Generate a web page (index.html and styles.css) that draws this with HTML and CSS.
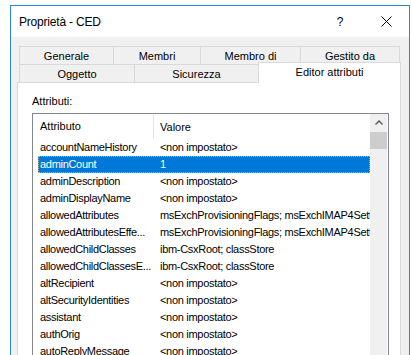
FILE: index.html
```html
<!DOCTYPE html>
<html lang="it">
<head>
    <meta charset="UTF-8">
    <title>Proprietà - CED</title>
    <link rel="stylesheet" href="styles.css">
</head>
<body>
    <div class="window">
        <div class="titlebar">
            <span class="title">Proprietà - CED</span>
            <span class="title-btn">?</span>
            <span class="title-btn">
                <svg width="11" height="11" viewBox="0 0 11 11"><path d="M0.5 0.5 L10.5 10.5 M10.5 0.5 L0.5 10.5" stroke="#000" stroke-width="1" fill="none"/></svg>
            </span>
        </div>
        <div class="client">
            <div class="tab-row">
                <div class="tab tab-generale">Generale</div>
                <div class="tab tab-membri">Membri</div>
                <div class="tab tab-membrodi">Membro di</div>
                <div class="tab tab-gestito">Gestito da</div>
            </div>
            <div class="tab-row tab-row-front">
                <div class="tab tab-oggetto">Oggetto</div>
                <div class="tab tab-sicurezza">Sicurezza</div>
                <div class="tab tab-editor selected">Editor attributi</div>
            </div>
            <div class="panel">
                <div class="label">Attributi:</div>
                <div class="listview">
                    <div class="list-body">
                        <div class="list-head">
                            <span class="head-name">Attributo</span>
                            <span class="head-value">Valore</span>
                        </div>
                        <div class="row"><span class="name">accountNameHistory</span><span class="value">&lt;non impostato&gt;</span></div>
                        <div class="row selected"><span class="name">adminCount</span><span class="value">1</span></div>
                        <div class="row"><span class="name">adminDescription</span><span class="value">&lt;non impostato&gt;</span></div>
                        <div class="row"><span class="name">adminDisplayName</span><span class="value">&lt;non impostato&gt;</span></div>
                        <div class="row"><span class="name">allowedAttributes</span><span class="value">msExchProvisioningFlags; msExchIMAP4Settings; msExchPOP3Settings</span></div>
                        <div class="row"><span class="name">allowedAttributesEffe...</span><span class="value">msExchProvisioningFlags; msExchIMAP4Settings; msExchPOP3Settings</span></div>
                        <div class="row"><span class="name">allowedChildClasses</span><span class="value">ibm-CsxRoot; classStore</span></div>
                        <div class="row"><span class="name">allowedChildClassesE...</span><span class="value">ibm-CsxRoot; classStore</span></div>
                        <div class="row"><span class="name">altRecipient</span><span class="value">&lt;non impostato&gt;</span></div>
                        <div class="row"><span class="name">altSecurityIdentities</span><span class="value">&lt;non impostato&gt;</span></div>
                        <div class="row"><span class="name">assistant</span><span class="value">&lt;non impostato&gt;</span></div>
                        <div class="row"><span class="name">authOrig</span><span class="value">&lt;non impostato&gt;</span></div>
                        <div class="row"><span class="name">autoReplyMessage</span><span class="value">&lt;non impostato&gt;</span></div>
                    </div>
                    <div class="scrollbar">
                        <div class="scroll-arrow">
                            <svg width="8" height="5" viewBox="0 0 8 5"><path d="M0.5 4.5 L4 1 L7.5 4.5" stroke="#606060" stroke-width="1.5" fill="none"/></svg>
                        </div>
                        <div class="scroll-thumb"></div>
                    </div>
                </div>
            </div>
        </div>
    </div>
</body>
</html>
```

FILE: styles.css
```css
body {
    margin: 0;
    background: #fff;
    font-family: "Liberation Sans", Arial, sans-serif;
    font-size: 11px;
    color: #000;
    overflow: hidden;
}
.window {
    margin: 5px 0 0 10px;
    width: 400px;
    height: 420px;
    box-sizing: border-box;
    border: 1px solid #2b88d8;
    display: flex;
    flex-direction: column;
}
.titlebar {
    height: 31px;
    background: #fff;
    display: flex;
    align-items: center;
    flex-shrink: 0;
}
.title {
    flex: 1;
    padding-left: 8px;
    font-size: 12px;
    letter-spacing: -0.2px;
}
.title-btn {
    width: 46px;
    height: 31px;
    display: flex;
    align-items: center;
    justify-content: center;
    font-size: 12px;
}
.client {
    flex: 1;
    background: #f0f0f0;
    padding: 9px 0 0 6px;
}
.tab-row {
    display: flex;
    margin-left: 2px;
    height: 18px;
}
.tab {
    box-sizing: border-box;
    height: 18px;
    margin-left: -1px;
    border: 1px solid #d9d9d9;
    border-bottom: none;
    display: flex;
    align-items: center;
    justify-content: center;
}
.tab:first-child {
    margin-left: 0;
}
.tab-generale { width: 95px; }
.tab-membri { width: 88px; }
.tab-membrodi { width: 101px; }
.tab-gestito { width: 100px; }
.tab-oggetto { width: 116px; }
.tab-sicurezza { width: 125px; }
.tab-editor { width: 143px; }
.tab.selected {
    position: relative;
    z-index: 1;
    height: 21px;
    margin-top: -2px;
    background: #fff;
    padding-bottom: 3px;
}
.panel {
    width: 384px;
    height: 400px;
    box-sizing: border-box;
    border: 1px solid #d9d9d9;
    background: #fff;
    padding: 11px 0 0 14px;
}
.label {
    line-height: 15px;
}
.listview {
    margin-top: 4px;
    width: 357px;
    height: 300px;
    box-sizing: border-box;
    border: 1px solid #828790;
    display: flex;
}
.list-body {
    width: 337px;
    overflow: hidden;
}
.list-head {
    display: flex;
    height: 25px;
    align-items: center;
}
.head-name {
    width: 121px;
    box-sizing: border-box;
    padding-left: 7px;
    line-height: 25px;
    border-right: 1px solid #e5e5e5;
}
.head-value {
    padding-left: 6px;
}
.row {
    display: flex;
    margin-left: 5px;
    width: 332px;
    height: 17px;
    line-height: 17px;
    white-space: nowrap;
    overflow: hidden;
    letter-spacing: -0.3px;
}
.row .name {
    width: 116px;
    flex-shrink: 0;
    padding-left: 2px;
    box-sizing: border-box;
    overflow: hidden;
}
.row .value {
    padding-left: 6px;
}
.row.selected {
    background: #0078d7;
    color: #fff;
    outline: 1px dotted #f5a04a;
    outline-offset: -1px;
}
.scrollbar {
    width: 17px;
    background: #f0f0f0;
}
.scroll-arrow {
    height: 17px;
    display: flex;
    align-items: center;
    justify-content: center;
}
.scroll-thumb {
    height: 17px;
    margin-top: 1px;
    background: #cdcdcd;
}
```
